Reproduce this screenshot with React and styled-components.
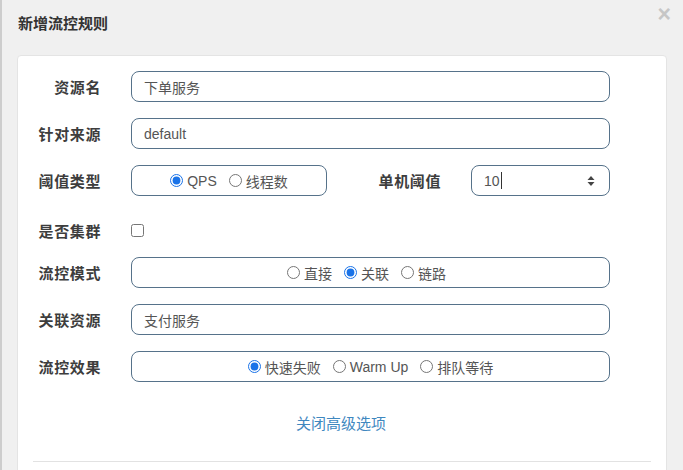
import React from "react";
import styled, { createGlobalStyle } from "styled-components";

const GlobalStyle = createGlobalStyle`
  html, body {
    margin: 0;
    padding: 0;
    background: #f0f0f0;
  }
  body {
    font-family: "Liberation Sans", "Noto Sans CJK SC", sans-serif;
    color: #333;
  }
`;

const Modal = styled.div`
  position: relative;
  width: 683px;
  height: 470px;
  overflow: hidden;
  box-sizing: border-box;
  background: #f0f0f0;
  border-left: 2px solid #cdcdcd;
`;

const Header = styled.div`
  display: flex;
  align-items: center;
  height: 54px;
  padding: 0 16px;
  box-sizing: border-box;
`;

const Title = styled.h4`
  margin: 0 0 10px;
  font-size: 15px;
  font-weight: bold;
  color: #333;
`;

const Close = styled.span`
  position: absolute;
  top: 1px;
  right: 12px;
  font-size: 23px;
  font-weight: bold;
  color: #c6c6c6;
  font-family: "Liberation Sans", sans-serif;
`;

const Card = styled.div`
  margin: 1px 16px 0 15px;
  background: #fff;
  border: 1px solid #e4e4e4;
  border-radius: 4px;
  padding: 15px 0 0;
  height: 500px;
`;

const Form = styled.div`
  display: flex;
  flex-direction: column;
  gap: 16px;
  padding-right: 56px;
`;

const Row = styled.div`
  display: grid;
  grid-template-columns: 83px 1fr;
  column-gap: 30px;
  align-items: center;
  padding-top: ${({ $pad }) => $pad || 0}px;
`;

const Label = styled.label`
  text-align: right;
  font-size: 15px;
  font-weight: bold;
  letter-spacing: 0.6px;
  color: #3d3d3d;
  font-family: "Noto Sans CJK SC", sans-serif;
`;

const Field = styled.input`
  height: 31px;
  box-sizing: border-box;
  width: 100%;
  border: 1px solid #56728a;
  border-radius: 8px;
  padding: 0 12px;
  font-size: 14px;
  color: #555;
  font-family: "Liberation Sans", "Noto Sans CJK SC", sans-serif;
  outline: none;
  background: #fff;
`;

const Split = styled.div`
  display: grid;
  grid-template-columns: 196px 1fr 139px;
  column-gap: 30px;
  align-items: center;
`;

const RadioBox = styled.div`
  height: 31px;
  box-sizing: border-box;
  border: 1px solid #56728a;
  border-radius: 8px;
  display: flex;
  align-items: center;
  justify-content: center;
  gap: 12px;
  padding-right: ${({ $shift }) => $shift || 0}px;
  font-size: 14px;
  color: #555;
`;

const Option = styled.label`
  display: flex;
  align-items: center;
  gap: 4px;
  font-family: "Liberation Sans", "Noto Sans CJK SC", sans-serif;
`;

const Radio = styled.input`
  margin: 0;
  width: 13px;
  height: 13px;
  accent-color: #1a73e8;
`;

const NumberBox = styled.div`
  height: 31px;
  box-sizing: border-box;
  border: 1px solid #56728a;
  border-radius: 8px;
  display: flex;
  align-items: center;
  padding: 0 14px 0 12px;
  font-size: 14px;
  color: #555;
`;

const Caret = styled.span`
  display: inline-block;
  width: 1px;
  height: 17px;
  background: #333;
  margin-left: 1px;
`;

const Spinner = styled.svg`
  margin-left: auto;
`;

const Check = styled.input`
  margin: 0;
  width: 13px;
  height: 13px;
`;

const LinkRow = styled.div`
  text-align: center;
  margin-top: 30px;
  padding-right: 2px;
`;

const MoreLink = styled.a`
  font-size: 15px;
  color: #3f88bf;
  text-decoration: none;
  font-family: "Noto Sans CJK SC", sans-serif;
`;

const Divider = styled.hr`
  margin: 28px 15px 0;
  border: 0;
  border-top: 1px solid #e2e2e2;
`;

const RadioGroup = ({ name, options, checked, shift }) => (
  <RadioBox $shift={shift}>
    {options.map((o) => (
      <Option key={o}>
        <Radio type="radio" name={name} readOnly checked={o === checked} />
        {o}
      </Option>
    ))}
  </RadioBox>
);

export default function App() {
  return (
    <Modal>
      <GlobalStyle />
      <Header>
        <Title>新增流控规则</Title>
        <Close>×</Close>
      </Header>
      <Card>
        <Form>
          <Row>
            <Label>资源名</Label>
            <Field readOnly value="下单服务" />
          </Row>
          <Row>
            <Label>针对来源</Label>
            <Field readOnly value="default" />
          </Row>
          <Row>
            <Label>阈值类型</Label>
            <Split>
              <RadioGroup name="grade" options={["QPS", "线程数"]} checked="QPS" />
              <Label>单机阈值</Label>
              <NumberBox>
                10<Caret />
                <Spinner width="8" height="12" viewBox="0 0 8 12">
                  <path d="M4 1 L7.5 5 H0.5 Z" fill="#444" />
                  <path d="M4 11 L7.5 7 H0.5 Z" fill="#444" />
                </Spinner>
              </NumberBox>
            </Split>
          </Row>
          <Row $pad={8}>
            <Label>是否集群</Label>
            <Check type="checkbox" readOnly />
          </Row>
          <Row>
            <Label>流控模式</Label>
            <RadioGroup name="strategy" options={["直接", "关联", "链路"]} checked="关联" shift={8} />
          </Row>
          <Row>
            <Label>关联资源</Label>
            <Field readOnly value="支付服务" />
          </Row>
          <Row>
            <Label>流控效果</Label>
            <RadioGroup name="behavior" options={["快速失败", "Warm Up", "排队等待"]} checked="快速失败" />
          </Row>
        </Form>
        <LinkRow>
          <MoreLink href="#">关闭高级选项</MoreLink>
        </LinkRow>
        <Divider />
      </Card>
    </Modal>
  );
}
